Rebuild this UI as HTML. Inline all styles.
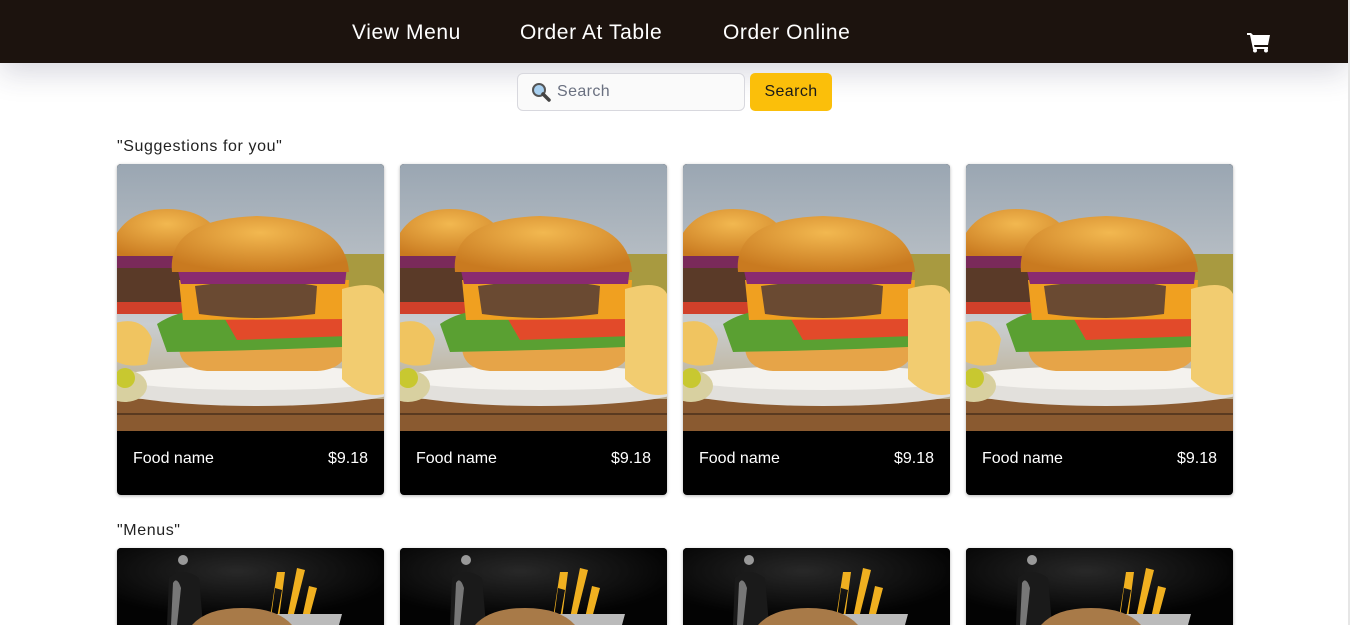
<!DOCTYPE html>
<html style="overflow:hidden;height:625px"><head><meta charset="utf-8"><style>
*{box-sizing:border-box;margin:0;padding:0}
body{width:1350px;height:625px;overflow:hidden;background:#fff;font-family:"Liberation Sans",sans-serif;position:relative}
.nav{position:absolute;left:0;top:0;width:1348px;height:63px;background:#1c130e;box-shadow:0 10px 30px rgba(40,40,80,.18)}
.nav a{position:absolute;top:21px;color:#fff;font-size:21px;text-decoration:none;letter-spacing:.6px}
.edge{position:absolute;right:0;top:0;width:2px;height:625px;background:#e6e6e6}
.search{position:absolute;left:517px;top:73px;width:228px;height:38px;border:1px solid #d8d8de;border-radius:6px;background:#fafafa}
.search span{position:absolute;left:39px;top:9px;font-size:16px;color:#6a7080;letter-spacing:.4px}
.btn{position:absolute;left:750px;top:73px;width:82px;height:38px;background:#fbbf0a;border-radius:5px;font-size:16px;color:#1a1a1a;text-align:center;line-height:38px;letter-spacing:.4px}
.lbl{position:absolute;left:117px;font-size:16px;color:#222;letter-spacing:.6px}
.card{position:absolute;width:267px;height:331px;border-radius:4px;overflow:hidden;background:#000;box-shadow:0 1px 3px rgba(0,0,0,.3)}
.card.m{height:77px;border-radius:4px 4px 0 0}
.card .f{position:absolute;top:267px;left:0;right:0;height:64px;color:#fff;font-size:16px}
.card .f b{font-weight:normal;position:absolute;top:19px;left:16px}
.card .f i{font-style:normal;position:absolute;top:19px;right:16px}
</style></head><body>
<svg width="0" height="0" style="position:absolute">
<defs>
<linearGradient id="bg" x1="0" y1="0" x2="0" y2="1"><stop offset="0" stop-color="#9aa6b2"/><stop offset=".6" stop-color="#c9cdd0"/><stop offset="1" stop-color="#b8a070"/></linearGradient>
<radialGradient id="bun" cx=".5" cy=".3" r=".7"><stop offset="0" stop-color="#f2b850"/><stop offset="1" stop-color="#c97a20"/></radialGradient>
<radialGradient id="dk" cx=".45" cy=".3" r=".6"><stop offset="0" stop-color="#3a3a3a"/><stop offset="1" stop-color="#050505"/></radialGradient>
<symbol id="burger" viewBox="0 0 267 267">
<rect width="267" height="267" fill="url(#bg)"/>
<rect x="225" y="90" width="42" height="40" fill="#a89a40"/>
<rect y="235" width="267" height="32" fill="#8a5a30"/>
<line x1="0" y1="250" x2="267" y2="250" stroke="#5a3a20" stroke-width="2"/>
<path d="M-10 95 Q0 45 50 45 Q100 45 110 90 Z" fill="url(#bun)"/>
<rect x="-10" y="92" width="100" height="12" fill="#7a2a5a"/>
<rect x="-10" y="104" width="90" height="35" fill="#5a3a28"/>
<rect x="-10" y="138" width="90" height="12" fill="#d0402a"/>
<ellipse cx="140" cy="222" rx="150" ry="20" fill="#e2e0dc"/>
<ellipse cx="140" cy="214" rx="140" ry="12" fill="#f4f2ee"/>
<path d="M62 178 L230 178 Q232 205 200 207 L90 207 Q60 205 62 178Z" fill="#e6a448"/>
<path d="M40 160 Q70 140 110 150 Q170 140 250 150 L248 182 Q160 186 50 188 Z" fill="#5aa032"/>
<path d="M105 150 L235 150 L232 172 L120 176 Z" fill="#e24a2a"/>
<path d="M62 116 L232 116 L230 155 L66 156 Z" fill="#f0a020"/>
<path d="M78 122 Q150 112 200 122 L198 150 Q140 158 82 150 Z" fill="#6a4a32"/>
<path d="M60 102 L230 102 L228 120 L64 120 Z" fill="#8a2a70"/>
<path d="M55 108 Q50 55 140 52 Q228 55 232 108 Z" fill="url(#bun)"/>
<path d="M225 125 Q260 115 267 130 L267 230 Q245 235 225 215 Z" fill="#f2cc70"/>
<path d="M-5 160 Q25 150 35 175 L30 200 Q10 205 -5 195Z" fill="#f0c460"/>
<ellipse cx="8" cy="222" rx="22" ry="16" fill="#d8d0a0"/>
<circle cx="8" cy="214" r="10" fill="#c8c830"/>
</symbol>
<symbol id="menu" viewBox="0 0 267 77">
<rect width="267" height="77" fill="url(#dk)"/>
<rect x="0" y="0" width="267" height="77" fill="#000" opacity=".3"/>
<circle cx="66" cy="12" r="5" fill="#999"/>
<path d="M52 30 Q66 18 82 30 L86 77 L50 77 Z" fill="#1a1a1a"/>
<path d="M56 35 Q60 28 64 40 L60 77 L54 77Z" fill="#777"/>
<path d="M153 70 L160 24 L168 24 L162 70Z M170 70 L180 20 L188 22 L176 70Z M185 70 L192 38 L200 40 L192 70Z M160 70 L165 42 L158 40 L154 70Z" fill="#f0b020"/>
<path d="M150 66 L225 66 L222 77 L152 77Z" fill="#bbb"/>
<path d="M75 77 Q90 60 125 60 Q160 60 175 77 Z" fill="#a87a48"/>
</symbol>
</defs></svg>

<div class="nav">
<a style="left:352px">View Menu</a>
<a style="left:520px">Order At Table</a>
<a style="left:723px">Order Online</a>
<svg style="position:absolute;left:1247px;top:32px" width="24" height="21" viewBox="0 0 24 21"><path d="M0 1 L4 1 L6 3 L23 3 L21 13 L7 13 L7.5 15 L21 15 L21 17 L6 17 L3 3 L0 3Z" fill="#fff"/><circle cx="8" cy="18.5" r="2" fill="#fff"/><circle cx="19" cy="18.5" r="2" fill="#fff"/></svg>
</div>
<div class="edge"></div>
<div class="search"><svg style="position:absolute;left:13px;top:8px" width="20" height="20" viewBox="0 0 20 20"><circle cx="8" cy="8" r="6" fill="#a8d0f0" stroke="#555" stroke-width="2"/><path d="M12 12 L18 18" stroke="#444" stroke-width="3.5" stroke-linecap="round"/></svg><span>Search</span></div>
<div class="btn">Search</div>
<div class="lbl" style="top:138px">"Suggestions for you"</div>
<div class="card" style="left:117px;top:164px"><svg width="267" height="267"><use href="#burger"/></svg><div class="f"><b>Food name</b><i>$9.18</i></div></div>
<div class="card" style="left:400px;top:164px"><svg width="267" height="267"><use href="#burger"/></svg><div class="f"><b>Food name</b><i>$9.18</i></div></div>
<div class="card" style="left:683px;top:164px"><svg width="267" height="267"><use href="#burger"/></svg><div class="f"><b>Food name</b><i>$9.18</i></div></div>
<div class="card" style="left:966px;top:164px"><svg width="267" height="267"><use href="#burger"/></svg><div class="f"><b>Food name</b><i>$9.18</i></div></div>
<div class="lbl" style="top:522px">"Menus"</div>
<div class="card m" style="left:117px;top:548px"><svg width="267" height="77"><use href="#menu"/></svg></div>
<div class="card m" style="left:400px;top:548px"><svg width="267" height="77"><use href="#menu"/></svg></div>
<div class="card m" style="left:683px;top:548px"><svg width="267" height="77"><use href="#menu"/></svg></div>
<div class="card m" style="left:966px;top:548px"><svg width="267" height="77"><use href="#menu"/></svg></div>
</body></html>
